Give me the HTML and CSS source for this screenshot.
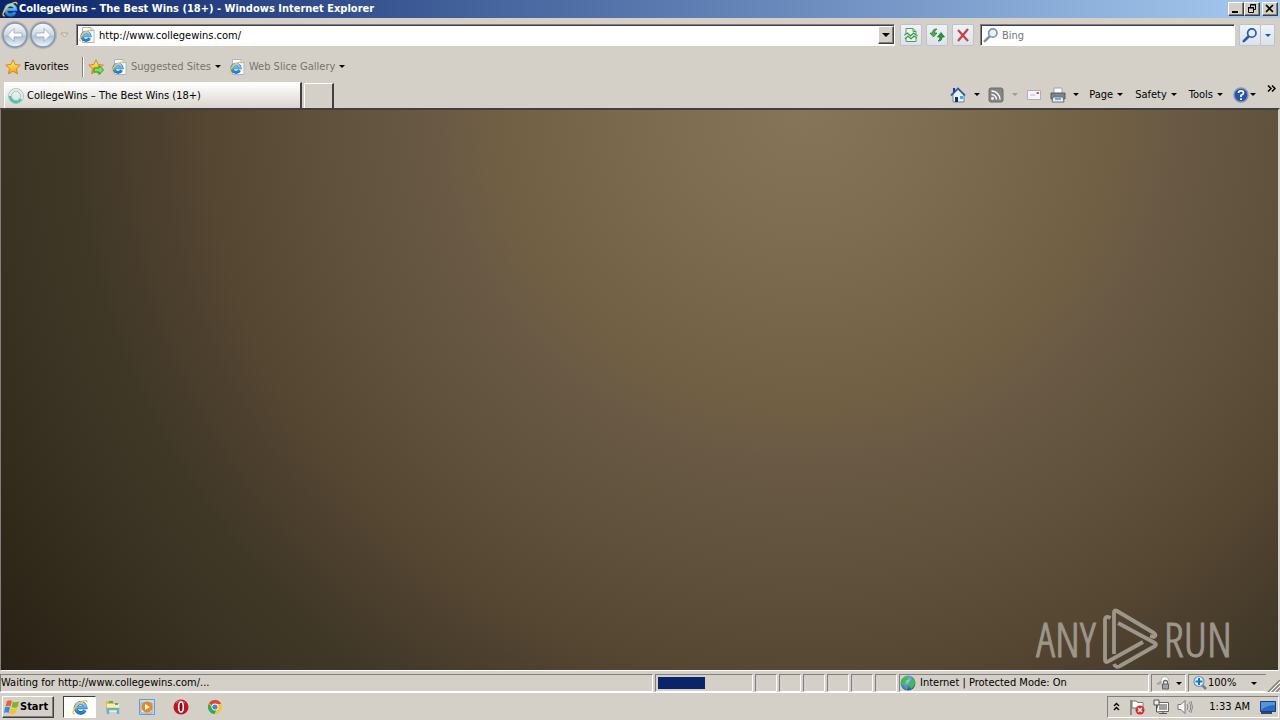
FILE: index.html
```html
<!DOCTYPE html>
<html lang="en">
<head>
<meta charset="utf-8">
<title>CollegeWins – The Best Wins (18+)</title>
<link rel="stylesheet" href="styles.css">
</head>
<body>
<svg class="defs" aria-hidden="true">
  <defs>
    <linearGradient id="blue" x1="0" y1="0" x2="0" y2="1"><stop offset="0" stop-color="#8fdcfa"/><stop offset="1" stop-color="#2478d8"/></linearGradient>
    <linearGradient id="ball" x1="0" y1="0" x2="0" y2="1"><stop offset="0" stop-color="#f8fbfe"/><stop offset=".5" stop-color="#ccd7e3"/><stop offset=".55" stop-color="#b0c2d6"/><stop offset="1" stop-color="#ecf8ff"/></linearGradient>
    <linearGradient id="gold" x1="0" y1="0" x2="0" y2="1"><stop offset="0" stop-color="#fff27c"/><stop offset="1" stop-color="#f79a16"/></linearGradient>
    <radialGradient id="globe" cx=".4" cy=".3" r=".8"><stop offset="0" stop-color="#9edcff"/><stop offset="1" stop-color="#123f94"/></radialGradient>
  </defs>
  <symbol id="e" viewBox="0 0 16 16">
    <path d="M13 11.300A5 5 0 1 1 13.600 8.500H5" fill="none" stroke="#1c5cb0" stroke-width="3.600"/>
    <path d="M13 11.300A5 5 0 1 1 13.600 8.500H5" fill="none" stroke="url(#blue)" stroke-width="2.600"/>
    <path d="M2.800 14.800C-.5 15.500 1 10 5.500 5.800C10 1.500 15.200-.2 15 3.400" fill="none" stroke="#f4c534" stroke-width="1.400"/>
  </symbol>
  <symbol id="page-e" viewBox="0 0 16 16">
    <path d="M3.500.5H12l3 3v12H3.500z" fill="#fff" stroke="#a9b4c6"/>
    <path d="M12 .5v3h3" fill="#dbe4f1" stroke="#a9b4c6"/>
    <svg x="0" y="2" width="13" height="13"><use href="#e"/></svg>
  </symbol>
  <symbol id="star" viewBox="0 0 16 16"><path d="M8 .8l2.100 4.700 5.200.6-3.800 3.500 1 5.300L8 12.300l-4.500 2.600 1-5.300L.7 6.100l5.200-.6z" fill="url(#gold)" stroke="#d28a1c"/></symbol>
  <symbol id="lens" viewBox="0 0 16 16"><path d="M6.500 9.500L1.800 14.200" stroke="currentColor" stroke-width="2.600" stroke-linecap="round"/><circle cx="9.800" cy="6" r="4.200" fill="#e3f2ff" stroke="currentColor" stroke-width="1.700"/></symbol>
</svg>

<header class="titlebar">
  <svg class="icon"><use href="#e"/></svg>
  <h1 class="title">CollegeWins – The Best Wins (18+) - Windows Internet Explorer</h1>
  <div class="window-buttons">
    <button class="win" aria-label="Minimize"><svg viewBox="0 0 12 10"><path d="M2 8h6" stroke="#000" stroke-width="2"/></svg></button>
    <button class="win" aria-label="Restore"><svg viewBox="0 0 12 10"><path d="M4.500 3V.5h5v5H8M4 1h6M2 4h6" fill="none" stroke="#000"/><path d="M2.500 4v4.500h5V4M2 3.500h6" fill="none" stroke="#000"/></svg></button>
    <button class="win close" aria-label="Close"><svg viewBox="0 0 12 10"><path d="M2 1l7 7M9 1L2 8" stroke="#000" stroke-width="1.700"/></svg></button>
  </div>
</header>

<nav class="navbar" aria-label="Navigation">
  <div class="travel">
    <button class="ball" aria-label="Back"><svg viewBox="0 0 28 28"><circle cx="14" cy="14" r="12" fill="url(#ball)" stroke="#8496ab" stroke-width="1.500"/><path d="M13 7.500L6.500 14l6.500 6.500v-4.500h8v-4h-8z" fill="#fff" stroke="#91a6bf" stroke-width=".8"/></svg></button>
    <button class="ball" aria-label="Forward"><svg viewBox="0 0 28 28"><circle cx="14" cy="14" r="12" fill="url(#ball)" stroke="#8496ab" stroke-width="1.500"/><path d="M15 7.500l6.500 6.500-6.500 6.500v-4.500H7v-4h8z" fill="#fff" stroke="#91a6bf" stroke-width=".8"/></svg></button>
    <button class="plain recent" aria-label="Recent pages"><svg viewBox="0 0 9 6"><path d="M1 1h7L4.500 5z" fill="#e8e4de" stroke="#aaa69e"/></svg></button>
  </div>
  <div class="field address">
    <svg class="icon"><use href="#page-e"/></svg>
    <input aria-label="Address" value="http://www.collegewins.com/">
    <button class="drop" aria-label="Show address list"><i class="arrow"></i></button>
  </div>
  <div class="nav-tools">
    <button class="tool" aria-label="Compatibility view"><svg class="icon" viewBox="0 0 16 16"><path d="M3 7V1.500h7l3 3V7M3 11v3.500h10V11M10 1.500v3h3" fill="#eef8ee" stroke="#5c9a5c"/><path d="M1.500 8l3-2 3 3 3-3 4 3M2 12l3-3 3 3 3-3 3 2" fill="none" stroke="#379b42" stroke-width="1.200"/></svg></button>
    <button class="tool" aria-label="Refresh"><svg class="icon" viewBox="0 0 16 16"><path d="M8 2Q3.500 1.500 3.500 6H1l3.500 4L8 6H5.500Q5.500 3 8 2z" fill="#48b347" stroke="#237b2a" stroke-width=".7"/><path d="M9 14q4 .5 4-4h2.500L12 5.500 8.500 10H11q0 3-2 4z" fill="#279938" stroke="#17702a" stroke-width=".7"/></svg></button>
    <button class="tool" aria-label="Stop"><svg class="icon" viewBox="0 0 16 16"><path d="M3 3l10 11M13 2L3 14" stroke="#c94343" stroke-width="2.300"/></svg></button>
  </div>
  <div class="field search">
    <svg class="icon grey"><use href="#lens"/></svg>
    <input aria-label="Search" placeholder="Bing">
  </div>
  <div class="search-go">
    <button class="tool" aria-label="Search"><svg class="icon blue"><use href="#lens"/></svg></button>
    <button class="tool narrow" aria-label="Search options"><i class="arrow blue"></i></button>
  </div>
</nav>

<nav class="favorites" aria-label="Favorites bar">
  <button class="plain fav-main"><svg class="icon"><use href="#star"/></svg>Favorites</button>
  <button class="plain add" aria-label="Add to Favorites bar"><svg class="icon" viewBox="0 0 16 16"><use href="#star"/><path d="M6 9h5V6.500l4.500 4.500-4.500 4.500V13H6z" fill="#7fe05f" stroke="#26912b"/></svg></button>
  <button class="plain link"><svg class="icon"><use href="#page-e"/></svg>Suggested Sites<i class="arrow"></i></button>
  <button class="plain link"><svg class="icon"><use href="#page-e"/></svg>Web Slice Gallery<i class="arrow"></i></button>
</nav>

<div class="tabrow">
  <button class="tab"><svg class="icon" viewBox="0 0 16 16"><circle cx="8" cy="8" r="6" fill="none" stroke="#8fa7a7" stroke-width="3.500"/><circle cx="8" cy="8" r="6" fill="none" stroke="#d6f1ed" stroke-width="2.500"/><path d="M2 8a6 6 0 0 0 6 6 6 6 0 0 0 5-3" fill="none" stroke="#46c7ad" stroke-width="2.500"/></svg>CollegeWins – The Best Wins (18+)</button>
  <button class="newtab" aria-label="New tab"></button>
  <div class="commands">
    <button class="plain" aria-label="Home"><svg class="icon" viewBox="0 0 16 16"><path d="M3 7v8h11V7L8 2z" fill="#e8f0fc" stroke="#7185b2"/><path d="M1 8.500L8 1.500l7 7" fill="none" stroke="#3e5aa5" stroke-width="1.800"/><path d="M3 1h2v4H3z" fill="#293a85"/><path d="M5 10h3v5H5z" fill="#183066"/><path d="M10 9h3v3h-3z" fill="#49a6ea"/></svg></button>
    <button class="plain" aria-label="Home options"><i class="arrow"></i></button>
    <button class="plain" aria-label="Feeds"><svg class="icon" viewBox="0 0 16 16"><rect x="1" y="1" width="14" height="14" rx="2" fill="#858585" stroke="#6c6c6c"/><circle cx="4.500" cy="11.500" r="1.400" fill="#fff"/><path d="M3.500 7.500a5 5 0 0 1 5 5M3.500 4a8.500 8.500 0 0 1 8.500 8.500" fill="none" stroke="#fff" stroke-width="1.500"/></svg></button>
    <button class="plain" aria-label="Feed options"><i class="arrow pale"></i></button>
    <button class="plain" aria-label="Read mail"><svg class="icon" viewBox="0 0 16 16"><path d="M1.500 3.500h13v9h-13z" fill="#f7f5fc" stroke="#b3abb8"/><path d="M10.500 5h2.500v2h-2.500z" fill="#d55"/><path d="M4 8h5" stroke="#b7b9d5"/></svg></button>
    <button class="plain print" aria-label="Print"><svg class="icon" viewBox="0 0 16 16"><path d="M4 1h8v6H4z" fill="#fff" stroke="#9ba1aa"/><path d="M1 6h14v6H1z" fill="#7d838d" stroke="#545963"/><path d="M3 10h10l1 5H2z" fill="#edf1f6" stroke="#6b727d"/><path d="M5 12h6" stroke="#4e91cb" stroke-width="1.500"/></svg></button>
    <button class="plain print-options" aria-label="Print options"><i class="arrow"></i></button>
    <button class="plain word">Page<i class="arrow"></i></button>
    <button class="plain word">Safety<i class="arrow"></i></button>
    <button class="plain word tools">Tools<i class="arrow"></i></button>
    <button class="plain help" aria-label="Help"><svg class="icon" viewBox="0 0 16 16"><circle cx="8" cy="8" r="7" fill="#2453b1" stroke="#8795b8" stroke-width="1.500"/><path d="M5.500 6Q5.500 3.800 8 3.800T10.500 6Q10.500 7.200 8 8.300V10M8 11.200V13" fill="none" stroke="#fff" stroke-width="1.800"/></svg><i class="arrow"></i></button>
    <button class="plain more" aria-label="More commands"><svg viewBox="0 0 9 7"><path d="M1 .5l3 3-3 3M5 .5l3 3-3 3" fill="none" stroke="#000" stroke-width="1.500"/></svg></button>
  </div>
</div>

<main class="page">
  <div class="watermark">
    <span>ANY</span>
    <svg viewBox="0 0 56 62"><g fill="none" stroke="#9d968b" stroke-width="3.800" stroke-linejoin="round"><path d="M8.500 10Q3 7 3 12v40q0 3 3 1.500L41 34"/><path d="M12 46V4.500q0-3 3-1.500L52 25q3 2 0 4l-4-1"/><path d="M16 15L53 35q2 1.500 0 3L18 58q-4 2.500-6-2"/></g></svg>
    <span>RUN</span>
  </div>
</main>

<footer class="status">
  <div class="cell message">Waiting for http://www.collegewins.com/...</div>
  <div class="cell progress"><div class="bar"></div></div>
  <div class="cell small"></div><div class="cell small"></div><div class="cell small"></div><div class="cell small"></div><div class="cell small"></div><div class="cell small"></div>
  <div class="cell zone"><svg class="icon" viewBox="0 0 16 16"><circle cx="8" cy="8" r="7.500" fill="url(#globe)"/><path d="M2 4q3-3 6-3l1 3-3 2-1 3-3 1Q0 7 2 4zM10 6l4-2q2 4 0 7l-3 3-1-3-2-2zM4 11l3 1v3q-2-1-3-4z" fill="#45ba4d"/></svg>Internet | Protected Mode: On</div>
  <div class="cell filter"><svg class="icon" viewBox="0 0 16 16"><path d="M6 5.500Q6 1.500 9.500 1.500T14 6v4H6z" fill="#f7f7f7" stroke="#b5b2ac"/><path d="M1 9l4-3 2 1-3 3z" fill="#a5a5a5"/><path d="M8.500 9V7.500a2 2 0 0 1 4 0V9" fill="none" stroke="#666" stroke-width="1.300"/><path d="M7.500 9h6v5h-6z" fill="#a2a2a2" stroke="#606060"/></svg><i class="arrow"></i></div>
  <button class="cell zoom"><svg class="icon" viewBox="0 0 16 16"><path d="M10 10l4 4" stroke="#727c8a" stroke-width="2.500"/><circle cx="7" cy="6.500" r="5" fill="#e5f4ff" stroke="#7195b9" stroke-width="1.200"/><path d="M7 3v7M3.500 6.500h7" stroke="#1674d1" stroke-width="2"/></svg><span>100%</span><i class="arrow"></i></button>
  <svg class="grip" viewBox="0 0 12 12"><path d="M0 12L12 0M4 12l8-8M8 12l4-4" stroke="#858078" stroke-width="1.500"/><path d="M2 12L12 2M6 12l6-6" stroke="#fff"/></svg>
</footer>

<footer class="taskbar">
  <button class="start"><svg class="flag" viewBox="0 0 16 16"><path d="M3 2q3-1.500 5 0L6.500 7.500q-2-1.500-5 0z" fill="#ee6030"/><path d="M9 2.500q2 1.500 6 0L13.500 8q-3 1.500-6 0z" fill="#79b829"/><path d="M1 8.500q3-1.500 5 0L4.500 14q-2-1.500-4.500 0z" fill="#328bdc"/><path d="M7 9q2 1.500 6 0l-1.500 5.500q-3 1.500-6 0z" fill="#f7c22e"/></svg>Start</button>
  <div class="launch">
    <button class="plain active" aria-label="Internet Explorer"><svg class="icon"><use href="#e"/></svg></button>
    <button class="plain" aria-label="Explorer"><svg class="icon" viewBox="0 0 16 16"><path d="M1 2h5l2 2h6v9H1z" fill="#e4bd4d"/><path d="M2 5h12v8H2z" fill="#fff0a1"/><path d="M4 3h4M10 5h3" stroke="#53ae61" stroke-width="2"/><path d="M3 15v-5h10v5" fill="none" stroke="#62afe1" stroke-width="2.500"/></svg></button>
    <button class="plain" aria-label="Media Player"><svg class="icon" viewBox="0 0 16 16"><path d="M.5.5h15v15H.5z" fill="#b9def7" stroke="#659dca"/><path d="M2 4h11v10H2z" fill="#e4f3fe" stroke="#7aadd3"/><circle cx="8" cy="8" r="5.500" fill="#f38315"/><path d="M6 5l5 3-5 3z" fill="#fff"/></svg></button>
    <button class="plain" aria-label="Opera"><svg class="icon" viewBox="0 0 16 16"><circle cx="8" cy="8" r="7.500" fill="#bd1620"/><path d="M3 4q4-4 9 0" fill="none" stroke="#e87070"/><ellipse cx="8" cy="8" rx="2.300" ry="5" fill="#811019" stroke="#fff" stroke-width="1.500"/></svg></button>
    <button class="plain" aria-label="Chrome"><svg class="icon" viewBox="0 0 16 16"><circle cx="8" cy="8" r="7" fill="#f6c632"/><path d="M8 8L2 4.400A7 7 0 0 1 14.200 5H8z" fill="#df4638"/><path d="M1.900 4.500A7 7 0 0 0 7.500 15L10 9.500 5.500 9.500z" fill="#32a65a"/><circle cx="8" cy="8" r="3.400" fill="#fff"/><circle cx="8" cy="8" r="2.600" fill="#4387df"/></svg></button>
  </div>
  <div class="tray">
    <svg class="chevrons" viewBox="0 0 7 9"><path d="M1 4l2.500-2.500L6 4M1 8l2.500-2.500L6 8" fill="none" stroke="#000" stroke-width="1.400"/></svg>
    <svg class="icon" viewBox="0 0 16 16"><path d="M2 1v15" stroke="#777" stroke-width="1.500"/><path d="M3 2h4l2 1.500h5v7H9L7 9H3z" fill="#fff" stroke="#777"/><circle cx="11" cy="11" r="4.500" fill="#d52e28"/><path d="M9 9l4 4m0-4l-4 4" stroke="#fff" stroke-width="1.400"/></svg>
    <svg class="icon" viewBox="0 0 16 16"><path d="M4.500 3.500h11v9h-11z" fill="#fff" stroke="#666"/><path d="M6 5h8v6H6z" fill="#a0a0a0"/><path d="M6 14.500h8M10 12v2" fill="none" stroke="#555"/><path d="M1 1h5v5H1zM3.500 6v7H6" fill="#eee" stroke="#555"/></svg>
    <svg class="icon" viewBox="0 0 16 16"><path d="M1 5.500h3L8 1.500v13l-4-4H1z" fill="#fafafa" stroke="#777"/><path d="M10 5q2 3 0 6M12 3q3.500 5 0 10M14 2q3 6 0 12" fill="none" stroke="#888"/></svg>
    <time class="clock">1:33 AM</time>
    <svg class="icon" viewBox="0 0 16 16"><path d="M.5 2.500h15v10H.5z" fill="#286bc5" stroke="#1d3c7c"/><path d="M1 3h14v3Q7 6 1 11z" fill="#5295df"/><path d="M1 14h11" stroke="#35455d" stroke-width="2"/></svg>
  </div>
</footer>
</body>
</html>
```
FILE: styles.css
```css
* { box-sizing: border-box; }
html, body { height: 100%; }
body {
  margin: 0;
  display: flex;
  flex-direction: column;
  overflow: hidden;
  background: #d4d0c8;
  color: #000;
  font: 11px/14px "DejaVu Sans Condensed", "Noto Sans", sans-serif;
}
button, input { font: inherit; color: inherit; margin: 0; padding: 0; }
button { display: flex; align-items: center; white-space: nowrap; }
svg { display: block; flex: none; }
.defs { position: absolute; width: 0; height: 0; }
.icon { width: 16px; height: 16px; }
.plain { border: 0; background: none; }
.arrow {
  flex: none;
  width: 0;
  height: 0;
  border: 3px solid transparent;
  border-top-color: #000;
  border-bottom: 0;
}
.arrow.blue { border-top-color: #2456a8; }
.arrow.pale { border-top-color: #a09c94; }

.titlebar {
  flex: none;
  display: flex;
  align-items: center;
  height: 18px;
  padding: 0 2px;
  background: linear-gradient(90deg, #0a246a, #a6caf0);
}
.title { flex: 1; margin: 0; font-size: 11px; line-height: 14px; color: #fff; padding-left: 1px; }
.window-buttons { display: flex; }
.win, .drop, .start {
  border: 1px solid;
  border-color: #fff #404040 #404040 #fff;
  background: #d4d0c8;
  box-shadow: inset -1px -1px #808080;
}
.win { width: 16px; height: 14px; justify-content: center; }
.win svg { width: 12px; height: 10px; }
.close { margin-left: 2px; }

.navbar { flex: none; display: flex; align-items: center; height: 34px; padding: 0 5px 0 1px; }
.travel { display: flex; align-items: center; margin-right: 4px; }
.ball { width: 28px; height: 28px; border: 0; border-radius: 14px; background: #b8b5b4; }
.ball svg { width: 28px; height: 28px; }
.recent { width: 15px; justify-content: center; }
.recent svg { width: 9px; height: 6px; }
.field {
  display: flex;
  align-items: center;
  height: 22px;
  background: #fff;
  border: 1px solid;
  border-color: #808080 #fff #fff #808080;
  box-shadow: inset 1px 1px #404040;
  padding-left: 2px;
}
.field input { flex: 1; min-width: 0; height: 18px; border: 0; outline: 0; background: none; }
.field input::placeholder { color: #777; opacity: 1; }
.address { flex: 1; margin-right: 5px; }
.address input { margin-left: 4px; }
.drop { width: 16px; height: 18px; justify-content: center; }
.drop .arrow { border-width: 4px 4px 0; }
.nav-tools { display: flex; gap: 4px; margin-right: 6px; }
.tool {
  width: 22px;
  height: 22px;
  justify-content: center;
  background: linear-gradient(#eff2f7, #dde2ea);
  border: 1px solid #bcc3cd;
  border-radius: 2px;
}
.search { flex: 0 1 255px; margin-right: 4px; }
.search input { margin-left: 3px; }
.search-go { display: flex; }
.narrow { width: 14px; border-left: 0; }
.grey { color: #8794a5; }
.icon.blue { color: #2659bd; }

.favorites { flex: none; display: flex; align-items: center; height: 29px; padding-left: 5px; }
.fav-main { gap: 3px; width: 78px; height: 20px; border-right: 1px solid #808080; box-shadow: 1px 0 #fff; }
.add { margin: 0 7px 0 5px; }
.link { gap: 4px; color: #77736c; margin-right: 8px; }

.tabrow { flex: none; display: flex; align-items: flex-end; height: 27px; padding-left: 4px; }
.tab {
  width: 298px;
  height: 26px;
  padding-left: 3px;
  gap: 3px;
  border: 1px solid;
  border-color: #fff #404040 transparent #fff;
  border-width: 1px 2px 0 1px;
  background: linear-gradient(#fff, #d9d5ce);
}
.newtab {
  width: 30px;
  height: 25px;
  margin-left: 2px;
  background: none;
  border: 1px solid;
  border-color: #fff #404040 transparent #fff;
  border-width: 1px 2px 0 1px;
}
.commands { display: flex; align-items: center; align-self: stretch; margin-left: auto; padding-right: 4px; }
.commands .icon + .arrow { margin-left: 1px; }
.commands > .plain { margin-right: 8px; }
.commands .print { margin-right: 7px; }
.commands .print-options { margin-right: 10px; }
.commands .word { gap: 4px; margin-right: 12px; }
.commands .tools { margin-right: 10px; }
.commands .help { margin-right: 11px; }
.commands .more { align-self: flex-start; margin: 4px 0 0; }
.more svg { width: 9px; height: 7px; }

.page {
  flex: 1;
  min-height: 0;
  display: flex;
  align-items: flex-end;
  justify-content: flex-end;
  border: 1px solid;
  border-color: #404040 #d4d0c8 #fff #808080;
  border-top-width: 2px;
  border-right-width: 2px;
  background: radial-gradient(ellipse 84% 184% at 63% 0, #867559 0, #7e6d50 12%, #715f44 29%, #6a5a45 34%, #5f513b 45%, #554632 56%, #4e402f 60%, #403827 68%, #393222 76%, #302819 85%, #251c14 97%);
}
.watermark {
  display: flex;
  align-items: center;
  gap: 6px;
  padding-right: 46px;
  color: #9d968b;
  font: 300 47px/58px "Open Sans Condensed Light", "Roboto Condensed Light", "Roboto Condensed", "Open Sans Condensed", "Liberation Sans Narrow", "Roboto", sans-serif;
  -webkit-text-stroke: 1px #9d968b;
}
.watermark svg { width: 56px; height: 62px; }

.status { flex: none; display: flex; height: 22px; padding-top: 3px; gap: 2px; border-bottom: 1px solid #fff; }
.cell {
  display: flex;
  align-items: center;
  height: 18px;
  background: none;
  border: 1px solid;
  border-color: #808080 #fff #fff #808080;
  white-space: nowrap;
}
.message { flex: 1; }
.progress { width: 98px; padding-left: 2px; }
.bar { width: 47px; height: 12px; background: #0a246a; }
.small { width: 22px; }
.zone { width: 250px; padding-left: 0; gap: 4px; }
.filter { width: 35px; padding-left: 3px; gap: 5px; }
.zoom { width: 78px; padding-left: 3px; border-right: 0; }
.zoom .arrow { margin-left: auto; margin-right: 9px; }
.grip { width: 12px; height: 12px; align-self: flex-end; }

.taskbar { flex: none; display: flex; align-items: center; height: 27px; padding: 1px 1px 0 2px; }
.start { width: 52px; height: 22px; padding-left: 1px; font-weight: bold; }
.flag { width: 16px; height: 16px; }
.launch { display: flex; margin-left: 9px; }
.launch .plain { width: 34px; height: 22px; justify-content: center; }
.launch .active {
  width: 33px;
  background: #fff;
  border: 1px solid;
  border-color: #404040 #fff #fff #404040;
}
.tray {
  display: flex;
  align-items: center;
  gap: 8px;
  height: 22px;
  margin-left: auto;
  padding: 0 2px 0 5px;
  border: 1px solid;
  border-color: #808080 #fff #fff #808080;
}
.chevrons { width: 7px; height: 9px; align-self: flex-start; margin: 5px 1px 0 0; }
.clock { margin: 0 2px 0 8px; }
```
